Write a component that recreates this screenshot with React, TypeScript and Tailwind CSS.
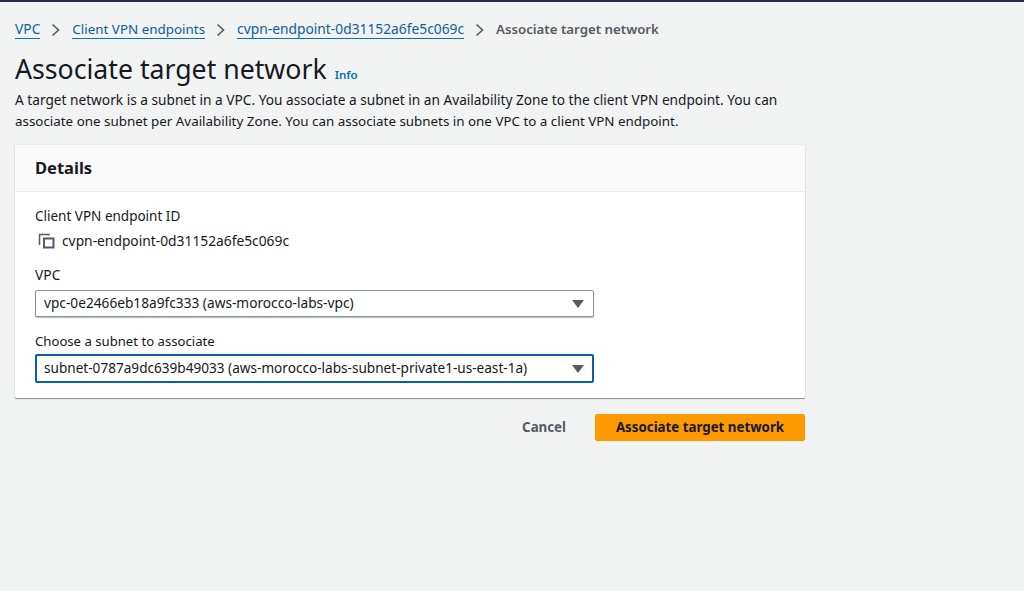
const crumbs = [
  { label: "VPC", size: "text-[13.8px]" },
  { label: "Client VPN endpoints", size: "text-[13.4px]" },
  { label: "cvpn-endpoint-0d31152a6fe5c069c", size: "text-[13.8px]" },
];

function Chevron() {
  return (
    <svg width="10" height="14" viewBox="0 0 10 14" fill="none" stroke="#545b64" strokeWidth="1.6" className="mx-[11px] shrink-0">
      <path d="M1.5 1.5 7.5 7 1.5 12.5" />
    </svg>
  );
}

// square-cornered copy glyph, the front sheet sits bottom right
function CopyIcon() {
  return (
    <svg width="17" height="16" viewBox="0 0 17 16" fill="none" stroke="#545b64" className="ml-[3px] mr-[7px] shrink-0">
      <path d="M1.5 12V1.5H12" strokeWidth="1.5" />
      <path d="M6 5.5H15.5V14.5H6Z" strokeWidth="2" />
    </svg>
  );
}

function SelectBox({ value, focused }: { value: string; focused?: boolean }) {
  return (
    <div
      className={
        "flex w-[559px] items-center justify-between rounded-[2px] bg-white text-[#16191f] " +
        (focused
          ? "h-[29px] border-2 border-[#0a5cb8] pl-[7px] pr-[8px] text-[13.6px]"
          : "h-[27px] border border-[#879596] pl-[8px] pr-[9px] text-[13.7px] shadow-[0_1px_1px_rgba(0,28,36,0.3)]")
      }
    >
      <span>{value}</span>
      <span className="h-0 w-0 border-x-[6px] border-t-[8px] border-x-transparent border-t-[#545b64]" />
    </div>
  );
}

export default function App() {
  return (
    <div className="min-h-[591px] border-t-2 border-[#232f3e] bg-[#f2f3f3] pl-[15px] font-['Noto_Sans',sans-serif] text-[#16191f]">
      <nav className="flex h-[37px] items-end leading-[20px]">
        {crumbs.map((c) => (
          <div key={c.label} className="flex items-center">
            <a className={"border-b border-[#0073bb] leading-[18px] text-[#0a5f9e] " + c.size}>{c.label}</a>
            <Chevron />
          </div>
        ))}
        <span className="text-[13.25px] font-semibold text-[#545b64]">Associate target network</span>
      </nav>

      <div className="mt-[5px] flex items-baseline">
        <h1 className="text-[26.66px] leading-[50px] text-[#16191f]">Associate target network</h1>
        <a className="ml-[8px] text-[11.5px] font-semibold text-[#0073bb]">Info</a>
      </div>

      <p className="-mt-[5px] w-[790px] leading-[22px] text-[#16191f]">
        <span className="block text-[13.68px]">
          A target network is a subnet in a VPC. You associate a subnet in an Availability Zone to the client VPN endpoint. You can
        </span>
        <span className="-mt-[1px] block text-[13.38px]">
          associate one subnet per Availability Zone. You can associate subnets in one VPC to a client VPN endpoint.
        </span>
      </p>

      <section className="mt-[13px] w-[790px] rounded-[1px] bg-white shadow-[0_1px_1px_rgba(0,28,36,0.45),0_0_1px_rgba(0,28,36,0.3)]">
        <div className="flex h-[47px] items-center border-b border-[#eaeded] bg-[#fafafa] px-[20px]">
          <h2 className="text-[16.5px] font-bold">Details</h2>
        </div>
        <div className="px-[20px] pb-[15px] pt-[14px] text-[13.5px]">
          <div className="leading-[20px]">Client VPN endpoint ID</div>
          <div className="mt-[5px] flex h-[20px] items-center text-[13.8px]">
            <CopyIcon />
            <span>cvpn-endpoint-0d31152a6fe5c069c</span>
          </div>
          <div className="mt-[14px] leading-[20px] text-[13.8px]">VPC</div>
          <div className="mt-[5px]">
            <SelectBox value="vpc-0e2466eb18a9fc333 (aws-morocco-labs-vpc)" />
          </div>
          <div className="mt-[14px] text-[13.15px] leading-[20px]">Choose a subnet to associate</div>
          <div className="mt-[3px]">
            <SelectBox focused value="subnet-0787a9dc639b49033 (aws-morocco-labs-subnet-private1-us-east-1a)" />
          </div>
        </div>
      </section>

      <div className="mt-[16px] flex w-[790px] items-center justify-end">
        <button className="mr-[29px] text-[13.3px] font-bold text-[#545b64]">Cancel</button>
        <button className="h-[27px] w-[210px] rounded-[2px] bg-[#ff9900] text-[13.3px] font-bold text-[#16191f]">
          Associate target network
        </button>
      </div>
    </div>
  );
}
